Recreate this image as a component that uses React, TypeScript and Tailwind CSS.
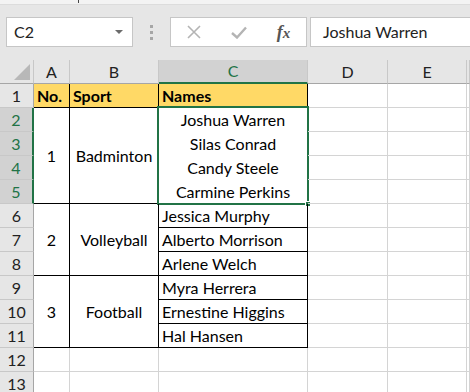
import React from "react";

const F = "font-['Lato','Liberation_Sans',sans-serif]";

function Cell({
  children,
  cls = "",
}: {
  children?: React.ReactNode;
  cls?: string;
}) {
  return <div className={`relative flex items-center overflow-visible whitespace-nowrap ${cls}`}>{children}</div>;
}

export default function App() {
  const gl = "border-r border-b border-[#d4d4d4]";
  const blk = "border-r border-b border-black";
  const colHdr = "border-r border-b border-r-[#c8c8c8] border-b-[#a6a6a6] bg-[#e6e6e6] justify-center text-[16px] text-[#222]";
  const colHdrSel = "border-r border-b-2 border-r-[#c8c8c8] border-b-[#217346] bg-[#d2d2d2] justify-center text-[16px] text-[#217346]";
  const rowHdr = "border-r border-b border-r-[#a6a6a6] border-b-[#c8c8c8] bg-[#e6e6e6] justify-center text-[16px] text-[#222]";
  const rowHdrSel = "border-r-2 border-b border-r-[#217346] border-b-[#c8c8c8] bg-[#d2d2d2] justify-center text-[16px] text-[#217346]";

  const emptyTail = (k: string) => [
    <Cell key={k + "d"} cls={gl} />,
    <Cell key={k + "e"} cls={gl} />,
    <Cell key={k + "f"} cls={gl} />,
  ];

  return (
    <div className={`w-[470px] h-[392px] overflow-hidden bg-white ${F}`}>
      {/* toolbar */}
      <div className="h-[60px] bg-[#e6e6e6] flex flex-col">
        <div className="h-[5px] bg-[#f3f3f3] border-b border-[#dcdcdc] relative">
          <div className="absolute left-[78px] top-0 w-[1px] h-[3px] bg-[#444]" />
        </div>
        <div className="flex items-start pt-[12px]">
          <div className="ml-[6px] w-[127px] h-[30px] bg-white border border-[#c6c6c6] flex items-center justify-between pl-[7px] pr-[9px]">
            <span className="text-[16px] text-[#222]">C2</span>
            <svg width="8" height="4" viewBox="0 0 8 4">
              <path d="M0 0 L8 0 L4 4 Z" fill="#6b6b6b" />
            </svg>
          </div>
          <div className="w-[37px] h-[30px] flex flex-col items-center justify-center gap-[3px]">
            <div className="w-[3px] h-[3px] bg-[#a6a6a6]" />
            <div className="w-[3px] h-[3px] bg-[#a6a6a6]" />
            <div className="w-[3px] h-[3px] bg-[#a6a6a6]" />
          </div>
          <div className="w-[137px] h-[30px] bg-white border border-[#c6c6c6] flex items-center">
            <div className="w-[45px] flex justify-center pl-[1px]">
              <svg width="14" height="14" viewBox="0 0 14 14">
                <path d="M1 1 L13 13 M13 1 L1 13" stroke="#b4b4b4" strokeWidth="1.6" fill="none" />
              </svg>
            </div>
            <div className="w-[45px] flex justify-center">
              <svg width="16" height="13" viewBox="0 0 16 13">
                <path d="M1 7 L6 11.5 L15 1.5" stroke="#b4b4b4" strokeWidth="2.4" fill="none" />
              </svg>
            </div>
            <div className="w-[45px] flex justify-center">
              <span className="font-['Liberation_Serif',serif] italic font-bold text-[18px] text-[#555] leading-none">
                f<span className="text-[15px]">x</span>
              </span>
            </div>
          </div>
          <div className="ml-[3px] flex-1 h-[30px] bg-white border border-[#c6c6c6] border-r-0 flex items-center pl-[12px]">
            <span className="text-[16px] text-[#222]">Joshua Warren</span>
          </div>
        </div>
      </div>

      {/* grid */}
      <div className="grid grid-cols-[34px_36px_89px_149px_80px_79px_1fr] auto-rows-[24px] text-[16px] text-black">
        {/* header row */}
        <Cell cls={colHdr}>
          <svg width="16" height="16" viewBox="0 0 16 16" className="absolute right-[3px] bottom-[3px]">
            <path d="M16 0 L16 16 L0 16 Z" fill="#b8b8b8" />
          </svg>
        </Cell>
        <Cell cls={colHdr}>A</Cell>
        <Cell cls={colHdr}>B</Cell>
        <Cell cls={colHdrSel}>C</Cell>
        <Cell cls={colHdr}>D</Cell>
        <Cell cls={colHdr}>E</Cell>
        <Cell cls={colHdr} />

        {/* row 1 */}
        <Cell cls={rowHdr}>1</Cell>
        <Cell cls={`${blk} bg-[#ffd966] font-bold pl-[3px]`}>No.</Cell>
        <Cell cls={`${blk} bg-[#ffd966] font-bold pl-[3px]`}>Sport</Cell>
        <Cell cls={`${blk} bg-[#ffd966] font-bold pl-[3px]`}>Names</Cell>
        {emptyTail("r1")}

        {/* row 2 */}
        <Cell cls={rowHdrSel}>2</Cell>
        <Cell cls={`${blk} row-span-4 justify-center`}>1</Cell>
        <Cell cls={`${blk} row-span-4 justify-center`}>Badminton</Cell>
        <div className={`${blk} row-span-4 relative flex flex-col`}>
          {["Joshua Warren", "Silas Conrad", "Candy Steele", "Carmine Perkins"].map((n) => (
            <div key={n} className="h-[24px] flex items-center justify-center">
              {n}
            </div>
          ))}
          <div className="absolute left-[-2px] top-[-2px] right-[-2px] bottom-[-2px] border-2 border-[#217346] pointer-events-none" />
          <div className="absolute right-[-4px] bottom-[-4px] w-[6px] h-[6px] bg-[#217346] border border-white" />
        </div>
        {emptyTail("r2")}
        <Cell cls={rowHdrSel}>3</Cell>
        {emptyTail("r3")}
        <Cell cls={rowHdrSel}>4</Cell>
        {emptyTail("r4")}
        <Cell cls={rowHdrSel}>5</Cell>
        {emptyTail("r5")}

        {/* row 6 */}
        <Cell cls={rowHdr}>6</Cell>
        <Cell cls={`${blk} row-span-3 justify-center`}>2</Cell>
        <Cell cls={`${blk} row-span-3 justify-center`}>Volleyball</Cell>
        <Cell cls={`${blk} pl-[3px]`}>Jessica Murphy</Cell>
        {emptyTail("r6")}
        <Cell cls={rowHdr}>7</Cell>
        <Cell cls={`${blk} pl-[3px]`}>Alberto Morrison</Cell>
        {emptyTail("r7")}
        <Cell cls={rowHdr}>8</Cell>
        <Cell cls={`${blk} pl-[3px]`}>Arlene Welch</Cell>
        {emptyTail("r8")}

        {/* row 9 */}
        <Cell cls={rowHdr}>9</Cell>
        <Cell cls={`${blk} row-span-3 justify-center`}>3</Cell>
        <Cell cls={`${blk} row-span-3 justify-center`}>Football</Cell>
        <Cell cls={`${blk} pl-[3px]`}>Myra Herrera</Cell>
        {emptyTail("r9")}
        <Cell cls={rowHdr}>10</Cell>
        <Cell cls={`${blk} pl-[3px]`}>Ernestine Higgins</Cell>
        {emptyTail("r10")}
        <Cell cls={rowHdr}>11</Cell>
        <Cell cls={`${blk} pl-[3px]`}>Hal Hansen</Cell>
        {emptyTail("r11")}

        {/* row 12, 13 */}
        <Cell cls={rowHdr}>12</Cell>
        <Cell cls={gl} />
        <Cell cls={gl} />
        <Cell cls={gl} />
        {emptyTail("r12")}
        <Cell cls={rowHdr}>13</Cell>
        <Cell cls={gl} />
        <Cell cls={gl} />
        <Cell cls={gl} />
        {emptyTail("r13")}
      </div>
    </div>
  );
}
